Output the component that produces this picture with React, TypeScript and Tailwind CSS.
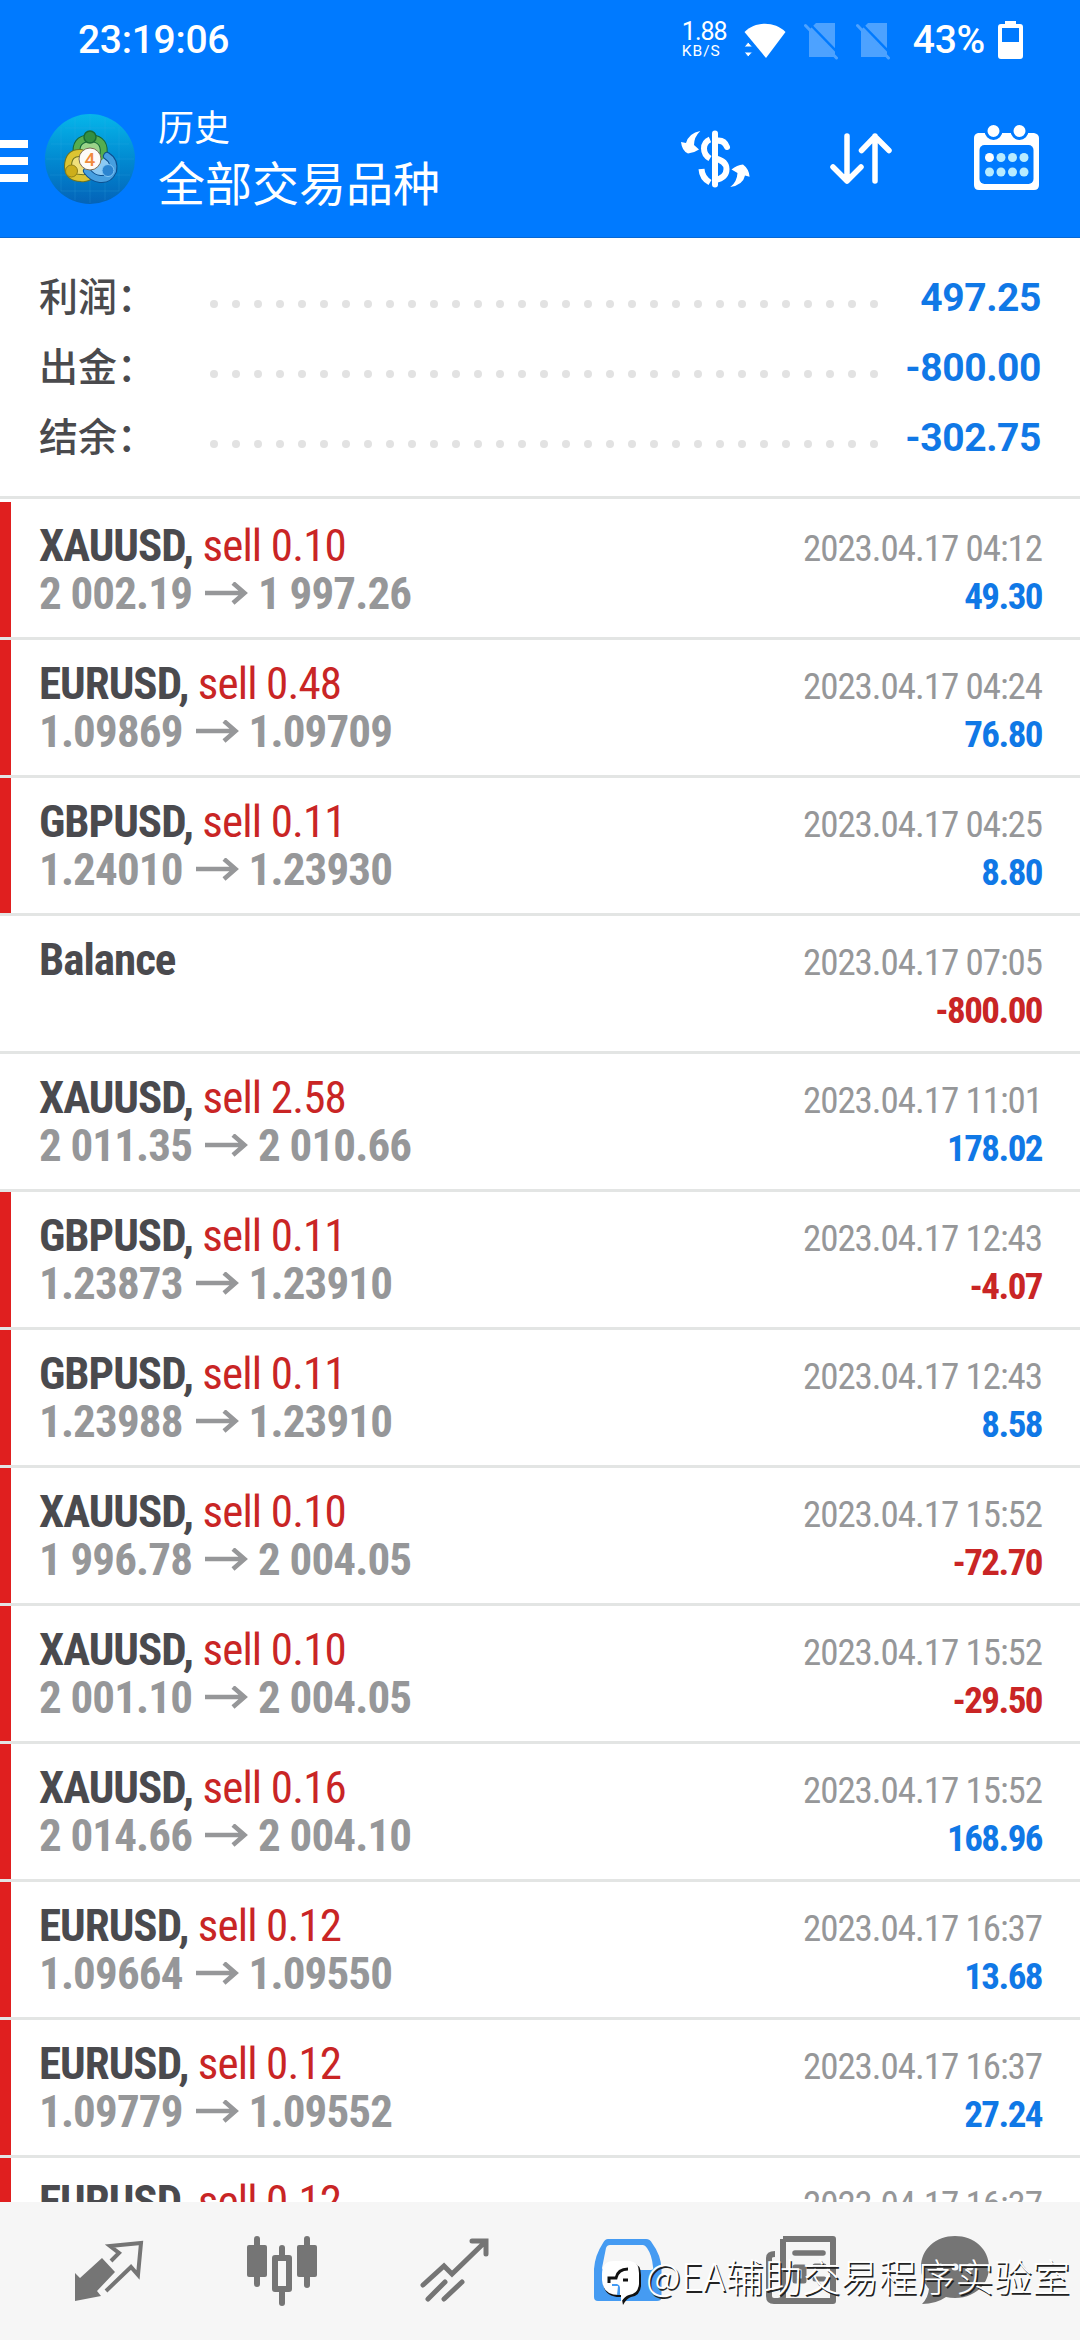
import { clsx } from "clsx";
import type { ReactNode } from "react";

type Deal = {
  symbol: string;
  side?: string;
  open?: string;
  close?: string;
  time: string;
  profit: string;
  marked?: boolean;
};

const deals: Deal[] = [
  { symbol: "XAUUSD", side: "sell 0.10", open: "2 002.19", close: "1 997.26", time: "2023.04.17 04:12", profit: "49.30", marked: true },
  { symbol: "EURUSD", side: "sell 0.48", open: "1.09869", close: "1.09709", time: "2023.04.17 04:24", profit: "76.80", marked: true },
  { symbol: "GBPUSD", side: "sell 0.11", open: "1.24010", close: "1.23930", time: "2023.04.17 04:25", profit: "8.80", marked: true },
  { symbol: "Balance", time: "2023.04.17 07:05", profit: "-800.00" },
  { symbol: "XAUUSD", side: "sell 2.58", open: "2 011.35", close: "2 010.66", time: "2023.04.17 11:01", profit: "178.02" },
  { symbol: "GBPUSD", side: "sell 0.11", open: "1.23873", close: "1.23910", time: "2023.04.17 12:43", profit: "-4.07", marked: true },
  { symbol: "GBPUSD", side: "sell 0.11", open: "1.23988", close: "1.23910", time: "2023.04.17 12:43", profit: "8.58", marked: true },
  { symbol: "XAUUSD", side: "sell 0.10", open: "1 996.78", close: "2 004.05", time: "2023.04.17 15:52", profit: "-72.70", marked: true },
  { symbol: "XAUUSD", side: "sell 0.10", open: "2 001.10", close: "2 004.05", time: "2023.04.17 15:52", profit: "-29.50", marked: true },
  { symbol: "XAUUSD", side: "sell 0.16", open: "2 014.66", close: "2 004.10", time: "2023.04.17 15:52", profit: "168.96", marked: true },
  { symbol: "EURUSD", side: "sell 0.12", open: "1.09664", close: "1.09550", time: "2023.04.17 16:37", profit: "13.68", marked: true },
  { symbol: "EURUSD", side: "sell 0.12", open: "1.09779", close: "1.09552", time: "2023.04.17 16:37", profit: "27.24", marked: true },
  // only the top edge of this one shows above the tab bar
  { symbol: "EURUSD", side: "sell 0.12", time: "2023.04.17 16:37", profit: "", marked: true },
];

const summary = [
  { label: "利润：", value: "497.25" },
  { label: "出金：", value: "-800.00" },
  { label: "结余：", value: "-302.75" },
];

function StatusBar() {
  return (
    <div className="flex h-20 items-center pl-[78px] text-[39px] font-medium leading-none tracking-[-0.3px] text-white">
      <span>23:19:06</span>
      <div className="ml-auto flex w-[47px] flex-col items-start font-normal">
        <span className="text-[25px] leading-[22px] tracking-[-1px]">1.88</span>
        <span className="text-[15.5px] leading-[16px] tracking-[1px]">KB/S</span>
      </div>
      <svg className="ml-[14px] h-[40px] w-[44px]" viewBox="0 0 44 40" fill="#fff">
        <path d="M1.500 12C12 1 32 1 42.500 12L23 38Z" />
        <path d="M1 27L5.200 22L9.500 27ZM1 32L5.200 37L9.500 32Z" stroke="#007aff" strokeWidth="1" />
      </svg>
      {[0, 1].map((i) => (
        <svg key={i} className="ml-[17px] h-[40px] w-[35px]" viewBox="0 0 35 40">
          <path d="M12 3H31V37H5V10Z" fill="#4da2ff" />
          <path d="M3 1L37 36" stroke="#007aff" strokeWidth="2.500" />
          <path d="M1.500 5.500L32.500 38" stroke="#4da2ff" strokeWidth="3" strokeLinecap="round" />
        </svg>
      ))}
      <span className="ml-[22px]">43%</span>
      <svg className="ml-[13px] mr-[57px] h-[40px] w-[25px]" viewBox="0 0 25 40">
        <path d="M7 1H18V4H22Q25 4 25 7V36Q25 39 22 39H3Q0 39 0 36V7Q0 4 3 4H7ZM4 8V22H21V8Z" fill="#fff" fillRule="evenodd" />
      </svg>
    </div>
  );
}

function Logo() {
  return (
    <svg className="h-[90px] w-[90px]" viewBox="0 0 90 90" fill="none">
      <defs>
        <linearGradient id="sea" x1="0" y1="0" x2="0" y2="1">
          <stop offset="0" stopColor="#06b6ea" />
          <stop offset="0.550" stopColor="#0186cf" />
          <stop offset="1" stopColor="#0463b8" />
        </linearGradient>
      </defs>
      <circle cx="45" cy="45" r="45" fill="url(#sea)" />
      <path d="M16 13V77M30 4V86M45 1V89M60 4V86M74 13V77M6 30H84M1 45H89M5 61H85M16 77H74M20 14H70" stroke="#43b3e8" strokeOpacity="0.18" />
      <g strokeLinecap="round">
        <path d="M58 43Q62 25 45 24Q29 25 32 41" fill="#9bd48a" stroke="#14663a" strokeWidth="8" />
        <path d="M58 43Q62 25 45 24Q29 25 32 41" stroke="#55ad50" strokeWidth="6" />
        <path d="M36 39Q23 38 23 53Q24 64 36 64Q42 65 46 61" fill="#f0e07a" stroke="#6f7420" strokeWidth="8" />
        <path d="M36 39Q23 38 23 53Q24 64 36 64Q42 65 46 61" stroke="#dcc432" strokeWidth="6" />
        <path d="M62 42Q70 47 68 57Q64 66 55 65Q47 64 42 57" fill="#8cc9f3" stroke="#0d4f8f" strokeWidth="8" />
        <path d="M62 42Q70 47 68 57Q64 66 55 65Q47 64 42 57" stroke="#479fe0" strokeWidth="6" />
      </g>
      <circle cx="45" cy="23" r="6" fill="#338f41" stroke="#1a6b33" strokeWidth="1.500" />
      <circle cx="26.500" cy="57" r="6" fill="#cdae1b" stroke="#8f7f16" strokeWidth="1" />
      <circle cx="63" cy="56.500" r="6" fill="#2b84d0" stroke="#83c6f5" strokeWidth="1" />
      <circle cx="45" cy="45" r="11" fill="#fdfbf8" stroke="#7a6b52" strokeWidth="1" />
      <text x="45" y="52" textAnchor="middle" fontSize="19" fontWeight="500" fill="#f08a3c">
        4
      </text>
    </svg>
  );
}

function Header() {
  return (
    <header className="h-[238px] border-b border-[#0868d4] bg-[#007aff] text-white">
      <StatusBar />
      <div className="flex h-[157px] items-start">
        <div className="mt-[60px] flex w-7 flex-col gap-[9px]">
          <div className="h-2 bg-white" />
          <div className="h-2 bg-white" />
          <div className="h-2 bg-white" />
        </div>
        <div className="ml-[17px] mt-[34px]">
          <Logo />
        </div>
        <div className="ml-[23px] mt-[28px] font-['Roboto','Noto_Sans_CJK_SC',sans-serif]">
          <div className="text-[36px] leading-[42px]">历史</div>
          <div className="mt-[7px] text-[47px] leading-[56px]">全部交易品种</div>
        </div>
        <svg className="ml-auto mt-[48px] h-[64px] w-[72px]" viewBox="0 0 72 64" fill="none" stroke="#fff">
          <path d="M36 5.500V56.500" strokeWidth="6" strokeLinecap="round" />
          <path d="M36 13Q45 11 48 19" strokeWidth="6" strokeLinecap="round" />
          <path d="M31 11.500Q25 14 25 20.500Q25 27 31 30.500M36 30.500Q47.500 33 47.500 41Q47.500 50 36 52M22.500 41Q23 50 31 54.500" strokeWidth="6" />
          <path d="M21.300 3Q10 5 7 15L2 14Q3 23 9 25.500Q15 25 20 21.500L15 17Q15 9 21.300 3ZM51.300 59Q64 57 66 47.500L70.600 48.700Q70 41 64 36.500Q58 37 52.500 41.500L58.500 45Q58 54 51.300 59Z" fill="#fff" stroke="none" />
        </svg>
        <svg className="ml-[78px] mt-[51px] h-[56px] w-[64px]" viewBox="0 0 64 56" fill="none" stroke="#fff" strokeWidth="5.500" strokeLinecap="round" strokeLinejoin="round">
          <path d="M18 5V50M4 36L18 50L32 36M46 50V5M32.500 19.500L46 5.500L60 19.500" />
        </svg>
        <svg className="ml-[80px] mr-[40px] mt-[44px] h-[68px] w-[67px]" viewBox="0 0 67 68">
          <path d="M5 9H61Q66 10 66 14V61Q66 66 61 66H6Q1 66 1 61V14Q1 10 5 9Z" fill="#fff" />
          <rect x="6.500" y="21" width="54" height="39" rx="5" fill="#007aff" />
          <g fill="#fff" stroke="#007aff" strokeWidth="3">
            <circle cx="20.500" cy="7" r="7.500" />
            <circle cx="46.500" cy="7" r="7.500" />
          </g>
          <g fill="#b8ecff">
            <circle cx="16.500" cy="33.500" r="4.500" fill="#fff" />
            <circle cx="28" cy="33.500" r="4.500" />
            <circle cx="39.500" cy="33.500" r="4.500" />
            <circle cx="51" cy="33.500" r="4.500" />
            <circle cx="16.500" cy="48" r="4.500" />
            <circle cx="28" cy="48" r="4.500" />
            <circle cx="39.500" cy="48" r="4.500" />
            <circle cx="51" cy="48" r="4.500" />
          </g>
        </svg>
      </div>
    </header>
  );
}

function Summary() {
  return (
    <section className="h-[261px] border-b-[3px] border-[#e3e5e4] pl-[39px] pr-[39px] pt-6">
      {summary.map((row) => (
        <div key={row.label} className="flex h-[70px] items-center">
          <span className="mb-[6px] w-[171px] font-['Noto_Sans_CJK_SC',sans-serif] text-[39px] font-medium leading-none text-[#4a4a4d]">{row.label}</span>
          <div className="mt-[14px] flex gap-[14px]">
            {Array.from({ length: 31 }, (_, i) => (
              <div key={i} className="h-2 w-2 rounded-full bg-[#e2e2e2]" />
            ))}
          </div>
          <span className="ml-auto mt-[2px] text-[39px] font-bold leading-none tracking-[-0.4px] text-[#1078e6]">{row.value}</span>
        </div>
      ))}
    </section>
  );
}

function DealRow({ deal }: { deal: Deal }) {
  return (
    <li className="flex h-[138px] shrink-0 border-b-[3px] border-[#e3e5e4]">
      <div className={clsx("w-[11px]", deal.marked && "bg-[#e01f1f]")} />
      <div className="flex flex-1 justify-between pl-7 pr-[38px] pt-[20px] [font-stretch:75%]">
        <div className="text-[45px] leading-[48px] tracking-[-0.85px]">
          <div className="whitespace-pre">
            <span className="font-bold tracking-[-1px] text-[#4a4a4e]">{deal.side ? deal.symbol + ", " : deal.symbol}</span>
            <span className="text-[#c92525]">{deal.side}</span>
          </div>
          {deal.open && (
            <div className="flex items-center font-bold text-[#969799]">
              <span>{deal.open}</span>
              <svg className="ml-[13px] mr-[9px] h-6 w-[44px]" viewBox="0 0 44 24" fill="none" stroke="#969799" strokeWidth="4.500">
                <path d="M0 11H40M28 1L39.500 11L28 21" />
              </svg>
              <span>{deal.close}</span>
            </div>
          )}
        </div>
        <div className="pt-[3px] text-right text-[37px] leading-[48px]">
          <div className="tracking-[-1.05px] text-[#969799]">{deal.time}</div>
          <div className={clsx("font-bold tracking-[-1.55px]", deal.profit.startsWith("-") ? "text-[#c92525]" : "text-[#1078e6]")}>{deal.profit}</div>
        </div>
      </div>
    </li>
  );
}

function Tab({ children }: { children: ReactNode }) {
  return <div className="flex justify-center pt-[34px]">{children}</div>;
}

function Watermark() {
  return (
    <div className="absolute left-[600px] top-[43px] flex items-center">
      <svg className="mt-[10px] h-[50px] w-[46px]" viewBox="0 0 46 50">
        <path d="M3 20Q3 8 15 8H32Q41 9 41 20V31Q40 41 31 42Q27 43 23 50Q22 46 22 42Q4 43 3 27Z" fill="#111" />
        <path d="M2 19Q2 6 14 6H30Q39 7 39 18V29Q38 39 29 40Q25 41 21 47V40Q3 41 2 25Z" fill="#fff" />
        <path d="M12 29H17Q20 30 20 33V40H17L18 31H12Z" fill="#459bf2" />
        <path d="M9 28V23H16Q18 14 28 14M23 25H28" fill="none" stroke="#111" strokeWidth="3" />
      </svg>
      <span className="whitespace-nowrap font-['Noto_Sans_CJK_SC',sans-serif] text-[38px] font-light leading-[50px] tracking-[0.3px] text-white [text-shadow:1.5px_1.5px_0_#222]">@EA辅助交易程序实验室</span>
    </div>
  );
}

function TabBar() {
  return (
    <nav className="relative grid h-[138px] grid-cols-[173px_173px_173px_173px_173px_136px] bg-[#f6f6f6] pl-[22px]">
      <Tab>
        <svg className="h-[72px] w-[72px]" viewBox="0 0 72 72">
          <path d="M29 22L42 36L24 55L28 60L2 65V37L7 42Z" fill="#757575" />
          <path d="M38 25L46 17L37 10L68 7L65 39L58 31L33 55" fill="none" stroke="#757575" strokeWidth="4" />
        </svg>
      </Tab>
      <Tab>
        <svg className="h-[72px] w-[72px]" viewBox="0 0 72 72" fill="#757575">
          <rect x="8" y="0" width="6" height="51" rx="3" />
          <rect x="58" y="0" width="6" height="52" rx="3" />
          <rect x="33" y="9" width="6" height="61" rx="3" />
          <rect x="1" y="9" width="20" height="32" rx="2" />
          <rect x="51" y="9" width="20" height="32" rx="2" />
          <rect x="29" y="22" width="14" height="31" fill="#f6f6f6" stroke="#757575" strokeWidth="6" strokeLinejoin="round" />
        </svg>
      </Tab>
      <Tab>
        <svg className="h-[72px] w-[72px]" viewBox="0 0 72 72" fill="none" stroke="#757575" strokeWidth="5">
          <path d="M4 49L25 30L33 38L66 6M53 5H67V18M9 63L26 46M25 63L43 46" strokeLinecap="round" />
        </svg>
      </Tab>
      <Tab>
        <svg className="h-[72px] w-[72px]" viewBox="0 0 72 72">
          <path d="M16 3H54Q58 3 60 7Q69 19 69.500 33V62Q69 65 65 65H6Q2 65 2 61V33Q3 19 11 7Q13 3 16 3ZM18 9Q15 9 14 12L10 32Q10 34 12 34H59Q62 34 61 31Q60 19 55 12Q53 9 51 9Z" fill="#459bf2" fillRule="evenodd" />
        </svg>
      </Tab>
      <Tab>
        <svg className="h-[72px] w-[72px]" viewBox="0 0 72 72" fill="none" stroke="#757575" strokeWidth="6" strokeLinejoin="round">
          <path d="M18 3H68V65H9Q4 65 4 60V22Q4 18 10 18M18 3V61Q18 65 11 65" />
          <path d="M30 17H58" strokeWidth="5.500" strokeLinecap="round" />
          <path d="M30 31H39V45H30ZM50 30H59M50 43H59" strokeWidth="5" strokeLinecap="round" />
        </svg>
      </Tab>
      <Tab>
        <svg className="h-[72px] w-[72px]" viewBox="0 0 72 72" fill="#757575">
          <path d="M36 0C55 0 70 13 70 31S55 62 36 62Q31 62 27 61Q17 68 3 68Q9 62 10 53Q2 44 2 31C2 13 17 0 36 0Z" />
          <g fill="#f6f6f6">
            <circle cx="21" cy="31" r="3.500" />
            <circle cx="36" cy="31" r="3.500" />
            <circle cx="51" cy="31" r="3.500" />
          </g>
        </svg>
      </Tab>
      <Watermark />
    </nav>
  );
}

export default function App() {
  return (
    <div className="flex h-[2340px] w-[1080px] flex-col overflow-hidden bg-white font-['Roboto',sans-serif]">
      <Header />
      <Summary />
      <ul className="flex min-h-0 flex-1 flex-col overflow-hidden pt-[3px]">
        {deals.map((deal, i) => (
          <DealRow key={i} deal={deal} />
        ))}
      </ul>
      <TabBar />
    </div>
  );
}
